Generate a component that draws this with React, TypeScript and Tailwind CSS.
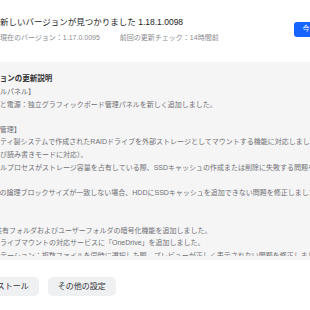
import React from "react";

const lines: string[] = [
  "【コントロールパネル】",
  "ハードウェアと電源：独立グラフィックボード管理パネルを新しく追加しました。",
  "",
  "【ストレージ管理】",
  "・サードパーティ製システムで作成されたRAIDドライブを外部ストレージとしてマウントする機能に対応しました（読み",
  "取り専用および読み書きモードに対応）。",
  "・一部のツールプロセスがストレージ容量を占有している際、SSDキャッシュの作成または削除に失敗する問題を修正し",
  "ました。",
  "・ディスク間の論理ブロックサイズが一致しない場合、HDDにSSDキャッシュを追加できない問題を修正しました。",
  "",
  "【その他】",
  "・ファイル 共有フォルダおよびユーザーフォルダの暗号化機能を追加しました。",
  "・クラウドドライブマウントの対応サービスに「OneDrive」を追加しました。",
  "・ファイルステーション：複数ファイルを同時に選択した際、プレビューが正しく表示されない問題を修正しました。",
  "・その他の軽微な不具合を修正しました。",
];

export default function App() {
  return (
    <div
      className="w-[310px] h-[310px] overflow-hidden bg-white"
      style={{ fontFamily: '"Liberation Sans", "Noto Sans CJK JP", sans-serif' }}
    >
      <div className="ml-[-62px] w-[420px] flex flex-col">
        {/* header */}
        <div className="flex items-center pt-[16px] pr-[12px]">
          <div className="w-[48px] h-[27px] mr-[14px] rounded-[6px] bg-[#e8eefc]" />
          <div className="flex-1 flex flex-col">
            <div className="text-[8.5px] leading-[12px] text-[#1c1c1e] whitespace-nowrap">
              新しいバージョンが見つかりました 1.18.1.0098
            </div>
            <div className="mt-[5px] text-[7px] leading-[10px] text-[#8a8a8e] whitespace-nowrap flex gap-[20px]">
              <span>現在のバージョン：1.17.0.0095</span>
              <span>前回の更新チェック：14時間前</span>
            </div>
          </div>
          <div className="w-[52px] h-[15px] rounded-[3px] bg-[#1664ff] text-white text-[7px] flex items-center justify-center whitespace-nowrap">
            今すぐ更新
          </div>
        </div>

        {/* notes panel */}
        <div className="mt-[19px] h-[198px] bg-[#f5f5f6] pt-[9px] pb-[4px] pl-[20px] flex flex-col">
          <div className="flex-1 min-h-0 overflow-hidden">
            <div className="ml-[-3px] text-[7.5px] leading-[15px] font-semibold text-[#333333] whitespace-nowrap">
              新しいバージョンの更新説明
            </div>
            {lines.map((t, i) => (
              <div
                key={i}
                className="text-[7px] leading-[12.6px] h-[12.6px] text-[#707074] whitespace-nowrap"
              >
                {t}
              </div>
            ))}
          </div>
        </div>

        {/* buttons */}
        <div className="mt-[17px] pl-[33px] flex gap-[9px]">
          <div className="h-[19px] px-[10px] rounded-[5px] bg-[#eff0f2] text-[8px] text-[#333336] flex items-center whitespace-nowrap">
            インストール
          </div>
          <div className="h-[19px] px-[10px] rounded-[5px] bg-[#eff0f2] text-[8px] text-[#333336] flex items-center whitespace-nowrap">
            その他の設定
          </div>
        </div>
      </div>
    </div>
  );
}
